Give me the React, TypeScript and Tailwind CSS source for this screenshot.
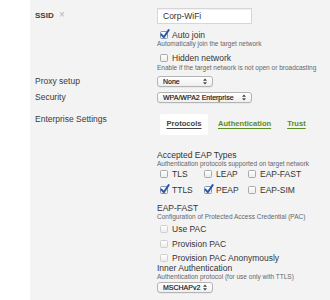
import React from 'react';

type BoxProps = { checked?: boolean; disabled?: boolean };

const Box: React.FC<BoxProps> = ({ checked, disabled }) => (
  <span className="relative inline-block w-[8px] h-[8px] shrink-0">
    <span
      className={`absolute inset-0 rounded-[1.5px] border bg-gradient-to-b from-white to-[#ececec] ${
        disabled ? 'border-[#cfcfcf]' : checked ? 'border-[#8797b3]' : 'border-[#a9a9a9]'
      }`}
    />
    {checked && (
      <svg className="absolute left-[0px] top-[-2px]" width="10" height="10" viewBox="0 0 9 9">
        <path d="M1.3 5 L3.4 7.4 L7.8 1" fill="none" stroke="#2853a6" strokeWidth="1.7" strokeLinecap="round" strokeLinejoin="round" />
      </svg>
    )}
  </span>
);

const Check: React.FC<{ label: string; checked?: boolean; disabled?: boolean; className?: string }> = ({
  label,
  checked,
  disabled,
  className = '',
}) => (
  <div className={`flex items-center h-[10px] pl-[3px] ${className}`}>
    <Box checked={checked} disabled={disabled} />
    <span className="ml-[4px] text-[8.5px] leading-[10px] text-[#333] whitespace-nowrap">{label}</span>
  </div>
);

const Arrows = () => (
  <svg width="4" height="7" viewBox="0 0 4 7" className="shrink-0">
    <path d="M0 2.8 L2 0.6 L4 2.8 Z M0 4.2 L2 6.4 L4 4.2 Z" fill="#444" />
  </svg>
);

const Select: React.FC<{ value: string; width: string }> = ({ value, width }) => (
  <div
    className={`${width} h-[11px] flex items-center justify-between pl-[5px] pr-[5px] rounded-[3px] border border-[#b3b3b3] bg-gradient-to-b from-white to-[#efefef] shadow-[0_0.5px_0_rgba(0,0,0,0.08)]`}
  >
    <span className="text-[7px] leading-[9px] text-[#111] whitespace-nowrap [-webkit-text-stroke:0.15px_#111]">{value}</span>
    <Arrows />
  </div>
);

const Caption: React.FC<{ children: React.ReactNode; className?: string }> = ({ children, className = '' }) => (
  <p className={`text-[6.5px] leading-[8px] text-[#666] whitespace-nowrap ${className}`}>{children}</p>
);

const Label: React.FC<{ children: React.ReactNode; className?: string }> = ({ children, className = '' }) => (
  <div className={`w-[122px] shrink-0 text-[8.5px] leading-[10px] text-[#3a3a3a] ${className}`}>{children}</div>
);

export default function App() {
  return (
    <div className="w-[330px] h-[300px] flex bg-white overflow-hidden" style={{ fontFamily: '"Liberation Sans", Arial, sans-serif' }}>
      <div className="w-[30px] shrink-0" />
      <div className="flex-1 bg-[#f3f3f3] pl-[5px]">
        {/* SSID group */}
        <div className="flex">
          <Label className="pt-[10px] font-bold text-[8px]">
            SSID <span className="ml-[3px] font-normal text-[10px] text-[#b5b5b5]">×</span>
          </Label>
          <div className="flex flex-col pt-[8px]">
            <div className="w-[95px] h-[16px] flex items-center pl-[5px] bg-white border border-[#d6d6d6] shadow-[inset_0_1px_1px_rgba(0,0,0,0.06)]">
              <span className="text-[8.5px] text-[#333]">Corp-WiFi</span>
            </div>
            <Check label="Auto join" checked className="mt-[6px]" />
            <Caption>Automatically join the target network</Caption>
            <Check label="Hidden network" className="mt-[5px]" />
            <Caption className="mt-[0.5px]">Enable if the target network is not open or broadcasting</Caption>
          </div>
        </div>

        {/* Proxy */}
        <div className="flex items-center mt-[4px]">
          <Label>Proxy setup</Label>
          <Select value="None" width="w-[56px]" />
        </div>

        {/* Security */}
        <div className="flex items-center mt-[5px]">
          <Label>Security</Label>
          <Select value="WPA/WPA2 Enterprise" width="w-[95px]" />
        </div>

        {/* Enterprise */}
        <div className="flex mt-[11px]">
          <Label>Enterprise Settings</Label>
          <div className="flex flex-col">
            <div className="flex items-center h-[21px] pl-[3px]">
              <div className="w-[48px] h-full flex items-center justify-center bg-white rounded-t-[2px]">
                <span className="text-[7.6px] font-bold text-[#444] underline underline-offset-[1.5px]">Protocols</span>
              </div>
              <span className="ml-[10px] text-[7.6px] font-bold text-[#5d8c25] underline underline-offset-[1.5px]">Authentication</span>
              <span className="ml-[16px] text-[7.6px] font-bold text-[#5d8c25] underline underline-offset-[1.5px]">Trust</span>
            </div>

            <p className="mt-[15px] text-[8.5px] leading-[10px] text-[#333]">Accepted EAP Types</p>
            <Caption>Authentication protocols supported on target network</Caption>
            <div className="grid grid-cols-[44px_44px_60px] mt-[1px]">
              <Check label="TLS" />
              <Check label="LEAP" />
              <Check label="EAP-FAST" />
            </div>
            <div className="grid grid-cols-[44px_44px_60px] mt-[6px]">
              <Check label="TTLS" checked />
              <Check label="PEAP" checked />
              <Check label="EAP-SIM" />
            </div>

            <p className="mt-[8px] text-[8.5px] leading-[10px] text-[#333]">EAP-FAST</p>
            <Caption>Configuration of Protected Access Credential (PAC)</Caption>
            <Check label="Use PAC" disabled className="mt-[3px]" />
            <Check label="Provision PAC" disabled className="mt-[5px]" />
            <Check label="Provision PAC Anonymously" disabled className="mt-[4px]" />
            <p className="text-[8.5px] leading-[10px] text-[#333]">Inner Authentication</p>
            <Caption>Authentication protocol (for use only with TTLS)</Caption>
            <div className="mt-[1px]">
              <Select value="MSCHAPv2" width="w-[56px]" />
            </div>
          </div>
        </div>
      </div>
    </div>
  );
}
